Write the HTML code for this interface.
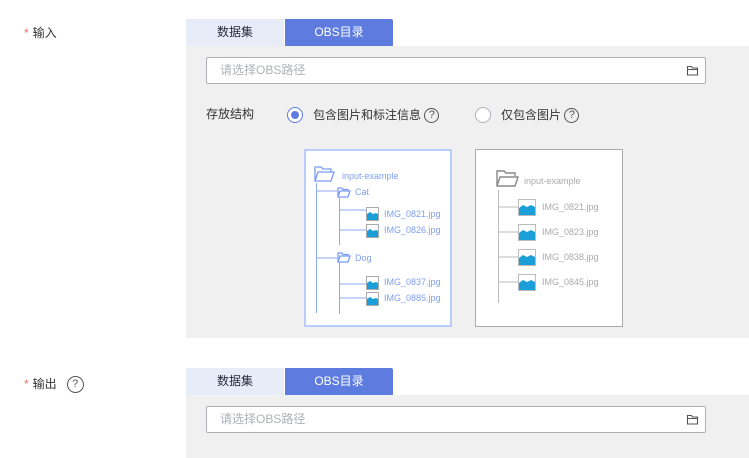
<!DOCTYPE html>
<html><head><meta charset="utf-8"><style>
*{margin:0;padding:0;box-sizing:border-box}
body{width:749px;height:458px;background:#fff;position:relative;overflow:hidden;font-family:"Liberation Sans","Noto Sans CJK SC",sans-serif;font-size:12px;color:#252b3a}
.a{position:absolute}
.lbl{font-size:12px;color:#333;line-height:16px}
.star{color:#f66f6a;margin-right:4px}
.tab{position:absolute;height:27px;line-height:27px;text-align:center;font-size:12px}
.t1{background:#e8ecf8;color:#252b3a;width:98px}
.t2{background:#5e7ce0;color:#fff;width:108px;border-radius:0 2px 0 0}
.panel{position:absolute;left:186px;width:563px;background:#f0f0f0}
.inp{position:absolute;left:206px;width:500px;height:27px;background:#fff;border:1px solid #adb0b8;border-radius:2px;color:#adb0b8;line-height:25px;padding-left:13px;font-size:12px}
.q{display:inline-block;width:15px;height:15px;border:1.2px solid #555;border-radius:50%;text-align:center;font-size:11px;line-height:13px;color:#555;vertical-align:middle}
</style></head><body>
<div class="a lbl" style="left:24px;top:25px"><span class="star">*</span>输入</div>
<div class="tab t1" style="left:186px;top:19px">数据集</div>
<div class="tab t2" style="left:285px;top:19px">OBS目录</div>
<div class="panel" style="top:46px;height:292px"></div>
<div class="inp" style="top:57px">请选择OBS路径</div>
<svg class="a" style="left:686px;top:63px" width="14" height="14" viewBox="0 0 14 14"><path d="M1.5 3.5h4l1 1.5h5v7h-10z M1.5 6.5h10" fill="none" stroke="#555" stroke-width="1.1"/></svg>
<div class="a lbl" style="left:206px;top:106px">存放结构</div>
<div class="a" style="left:287px;top:107px;width:16px;height:16px;border:1.3px solid #5e7ce0;border-radius:50%;background:#fff"><div style="position:absolute;left:3px;top:3px;width:8px;height:8px;border-radius:50%;background:#5e7ce0"></div></div>
<div class="a lbl" style="left:313px;top:107px">包含图片和标注信息 <span class="q">?</span></div>
<div class="a" style="left:475px;top:107px;width:16px;height:16px;border:1px solid #adb0b8;border-radius:50%;background:#fff"></div>
<div class="a lbl" style="left:501px;top:107px">仅包含图片 <span class="q">?</span></div>

<svg class="a" style="left:0;top:0" width="749" height="458" font-family="Liberation Sans, sans-serif" font-size="9">
<rect x="305" y="150" width="146" height="176" fill="#fff" stroke="#b8cdfb" stroke-width="2"/>
<rect x="475.5" y="149.5" width="147" height="177" fill="#fff" stroke="#aaa" stroke-width="1"/>
<g stroke="#7a9cf5" fill="none" stroke-width="1.3">
<path d="M315 181v-14h6l2 2h8v3 M315 181l3-9h16l-3 9z"/>
<path d="M338 197v-9h4l1 1.5h5v2 M338 197l2-6h10l-2 6z"/>
<path d="M338 262v-9h4l1 1.5h5v2 M338 262l2-6h10l-2 6z"/>
</g>
<g stroke="#8eaaf5" stroke-width="1">
<path d="M316.5 183v130 M316 191h21 M339.5 197v48 M339 210h27 M339 230h27 M316 258h21 M339.5 262v52 M339 284h27 M339 298h27"/>
</g>
<g fill="#7e9ff2"><text x="342" y="179">input-example</text><text x="355" y="195">Cat</text><text x="355" y="261">Dog</text>
<text x="384" y="217">IMG_0821.jpg</text><text x="384" y="233">IMG_0826.jpg</text><text x="384" y="285">IMG_0837.jpg</text><text x="384" y="301">IMG_0885.jpg</text></g>
<g>
<rect x="366.5" y="207.5" width="12" height="13" fill="#fff" stroke="#aaa"/><path d="M367 214l3-2 3 2 3-1 2 1v6h-11z" fill="#1a9fd8"/>
<rect x="366.5" y="224.5" width="12" height="13" fill="#fff" stroke="#aaa"/><path d="M367 231l3-2 3 2 3-1 2 1v6h-11z" fill="#1a9fd8"/>
<rect x="366.5" y="276.5" width="12" height="13" fill="#fff" stroke="#aaa"/><path d="M367 283l3-2 3 2 3-1 2 1v6h-11z" fill="#1a9fd8"/>
<rect x="366.5" y="292.5" width="12" height="13" fill="#fff" stroke="#aaa"/><path d="M367 299l3-2 3 2 3-1 2 1v6h-11z" fill="#1a9fd8"/>
</g>
<path d="M497 186v-15h7l2 2h9v3 M497 186l3-9h18l-3 9z" stroke="#888" stroke-width="1.4" fill="none"/>
<path d="M498.5 190v113 M498 207h20 M498 232h20 M498 257h20 M498 282h20" stroke="#bbb" stroke-width="1"/>
<g fill="#aaa"><text x="524" y="184">input-example</text><text x="542" y="210">IMG_0821.jpg</text><text x="542" y="235">IMG_0823.jpg</text><text x="542" y="260">IMG_0838.jpg</text><text x="542" y="285">IMG_0845.jpg</text></g>
<g>
<rect x="518.5" y="199.5" width="17" height="16" fill="#fff" stroke="#bbb"/><path d="M519 208l4-3 4 2 4-2 4 2v8h-16z" fill="#1a9fd8"/>
<rect x="518.5" y="224.5" width="17" height="16" fill="#fff" stroke="#bbb"/><path d="M519 233l4-3 4 2 4-2 4 2v8h-16z" fill="#1a9fd8"/>
<rect x="518.5" y="249.5" width="17" height="16" fill="#fff" stroke="#bbb"/><path d="M519 258l4-3 4 2 4-2 4 2v8h-16z" fill="#1a9fd8"/>
<rect x="518.5" y="274.5" width="17" height="16" fill="#fff" stroke="#bbb"/><path d="M519 283l4-3 4 2 4-2 4 2v8h-16z" fill="#1a9fd8"/>
</g>
</svg>

<div class="a lbl" style="left:24px;top:376px"><span class="star">*</span>输出 &nbsp; <span class="q" style="width:17px;height:17px;line-height:15px">?</span></div>
<div class="tab t1" style="left:186px;top:368px">数据集</div>
<div class="tab t2" style="left:285px;top:368px">OBS目录</div>
<div class="panel" style="top:395px;height:63px"></div>
<div class="inp" style="top:406px">请选择OBS路径</div>
<svg class="a" style="left:686px;top:412px" width="14" height="14" viewBox="0 0 14 14"><path d="M1.5 3.5h4l1 1.5h5v7h-10z M1.5 6.5h10" fill="none" stroke="#555" stroke-width="1.1"/></svg>
</body></html>
